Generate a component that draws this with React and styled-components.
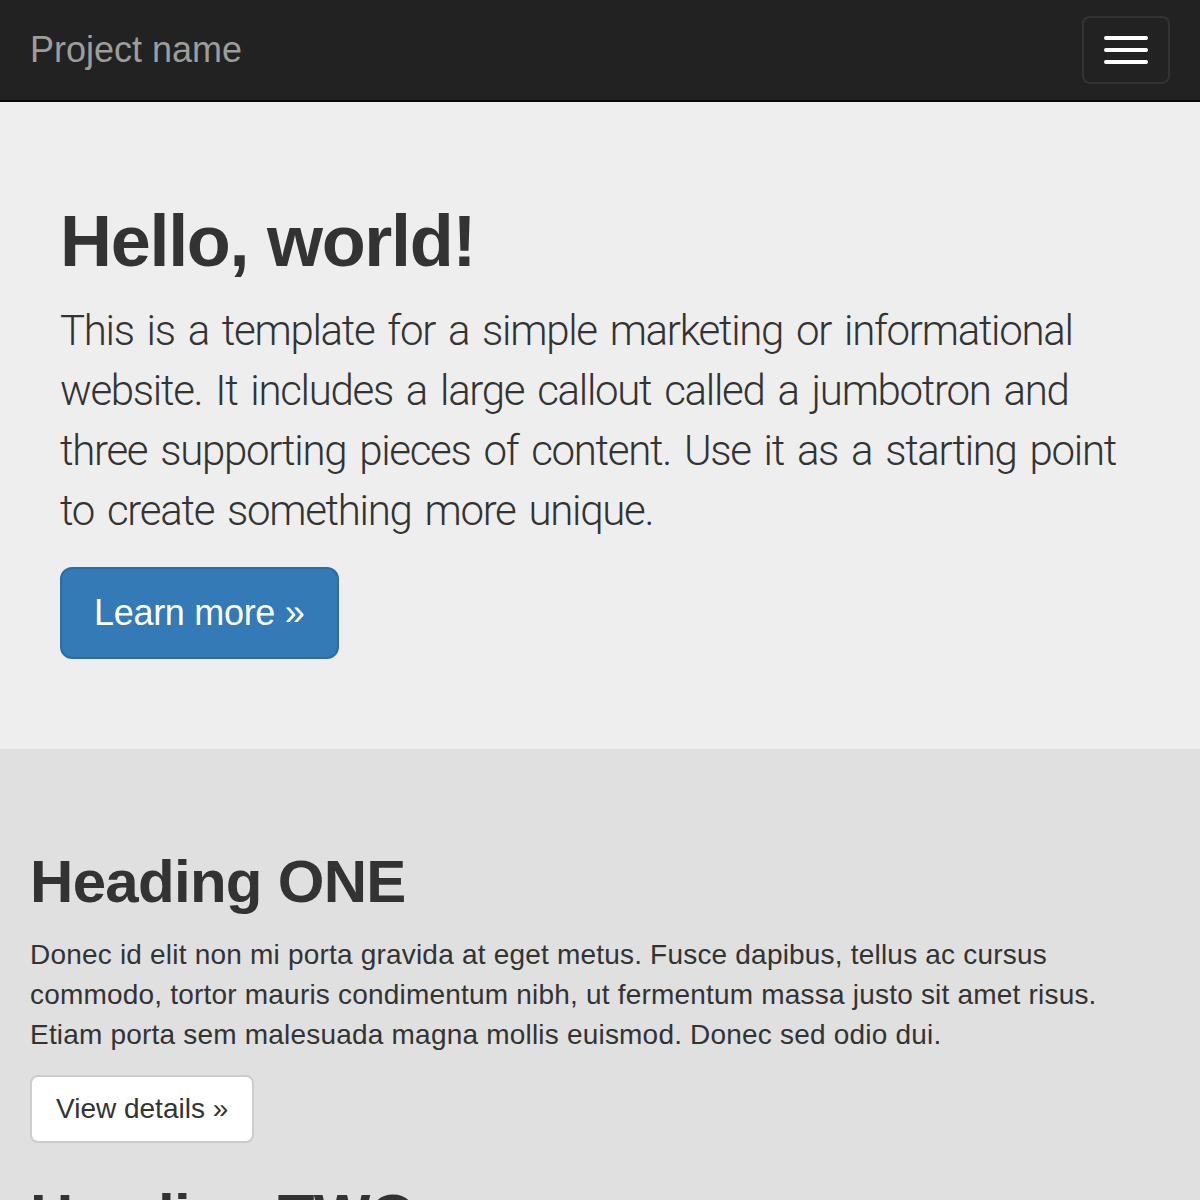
import React from "react";
import styled, { createGlobalStyle } from "styled-components";

const GlobalStyle = createGlobalStyle`
	html {
		background: #e0e0e0;
	}
	body {
		margin: 0;
		background: #e0e0e0;
		color: #333;
		font-family: "Liberation Sans", Arial, sans-serif;
		font-size: 28px;
		line-height: 40px;
	}
`;

const columns = [
	{ title: "Heading ONE" },
	{ title: "Heading TWO" },
	{ title: "Heading THREE" },
];

const bodyText =
	"Donec id elit non mi porta gravida at eget metus. Fusce dapibus, tellus ac cursus commodo, tortor mauris condimentum nibh, ut fermentum massa justo sit amet risus. Etiam porta sem malesuada magna mollis euismod. Donec sed odio dui.";

const App = () => {
	return (
		<>
			<GlobalStyle />
			<Navbar>
				<NavInner>
					<Brand href="#">Project name</Brand>
					<Toggle type="button" aria-label="Toggle navigation">
						<IconBar />
						<IconBar />
						<IconBar />
					</Toggle>
				</NavInner>
			</Navbar>

			<Jumbotron>
				<Title>Hello, world!</Title>
				<Lead>
					This is a template for a simple marketing or informational website.
					It includes a large callout called a jumbotron and three supporting
					pieces of content. Use it as a starting point to create something
					more unique.
				</Lead>
				<ButtonRow>
					<PrimaryButton href="#">Learn more &raquo;</PrimaryButton>
				</ButtonRow>
			</Jumbotron>

			<Container>
				{columns.map((col) => (
					<Column key={col.title}>
						<Heading>{col.title}</Heading>
						<Text>{bodyText}</Text>
						<ButtonRow small>
							<DefaultButton href="#">View details &raquo;</DefaultButton>
						</ButtonRow>
					</Column>
				))}
				<Footer>&copy; Company 2014</Footer>
			</Container>
		</>
	);
};

export default App;

const Navbar = styled.nav`
	background: #222;
	border-bottom: 2px solid #080808;
`;

const NavInner = styled.div`
	display: flex;
	justify-content: space-between;
	align-items: flex-start;
	padding: 0 30px;
`;

const Brand = styled.a`
	display: block;
	padding: 30px 0;
	font-size: 36px;
	line-height: 40px;
	color: #9d9d9d;
	text-decoration: none;
`;

const Toggle = styled.button`
	display: flex;
	flex-direction: column;
	gap: 8px;
	margin: 16px 0;
	padding: 18px 20px;
	background: transparent;
	border: 2px solid #333;
	border-radius: 8px;
	cursor: pointer;
`;

const IconBar = styled.span`
	display: block;
	width: 44px;
	height: 4px;
	background: #fff;
	border-radius: 2px;
`;

const Jumbotron = styled.section`
	background: #eee;
	padding: 60px 60px;
	margin-bottom: 60px;
`;

const Title = styled.h1`
	margin: 40px 0 20px;
	font-size: 72px;
	line-height: 1.1;
	font-weight: 700;
	letter-spacing: -1.3px;
	color: #333;
`;

const Lead = styled.p`
	margin: 0 0 26px;
	font-family: "Roboto", "Liberation Sans", sans-serif;
	font-size: 42px;
	line-height: 60px;
	font-weight: 300;
	letter-spacing: -1.3px;
	word-spacing: 4px;
	color: #333;
`;

const ButtonRow = styled.div`
	margin-bottom: ${(props) => (props.small ? "20px" : "30px")};
	line-height: 0;
`;

const PrimaryButton = styled.a`
	display: inline-block;
	padding: 20px 32px;
	font-size: 36px;
	line-height: 48px;
	letter-spacing: -0.3px;
	color: #fff;
	background: #337ab7;
	border: 2px solid #2e6da4;
	border-radius: 12px;
	text-decoration: none;
`;

const Container = styled.main`
	display: flow-root;
	padding: 0 30px;
`;

const Column = styled.div``;

const Heading = styled.h2`
	margin: 40px 0 20px;
	font-size: 60px;
	line-height: 1.1;
	font-weight: 700;
	letter-spacing: -0.7px;
	color: #333;
`;

const Text = styled.p`
	margin: 0 0 20px;
	letter-spacing: 0.2px;
`;

const DefaultButton = styled.a`
	display: inline-block;
	padding: 12px 24px;
	font-size: 28px;
	line-height: 40px;
	color: #333;
	background: #fff;
	border: 2px solid #ccc;
	border-radius: 8px;
	text-decoration: none;
`;

const Footer = styled.footer`
	padding: 40px 0;
	border-top: 2px solid #ccc;
	margin-top: 40px;
`;
